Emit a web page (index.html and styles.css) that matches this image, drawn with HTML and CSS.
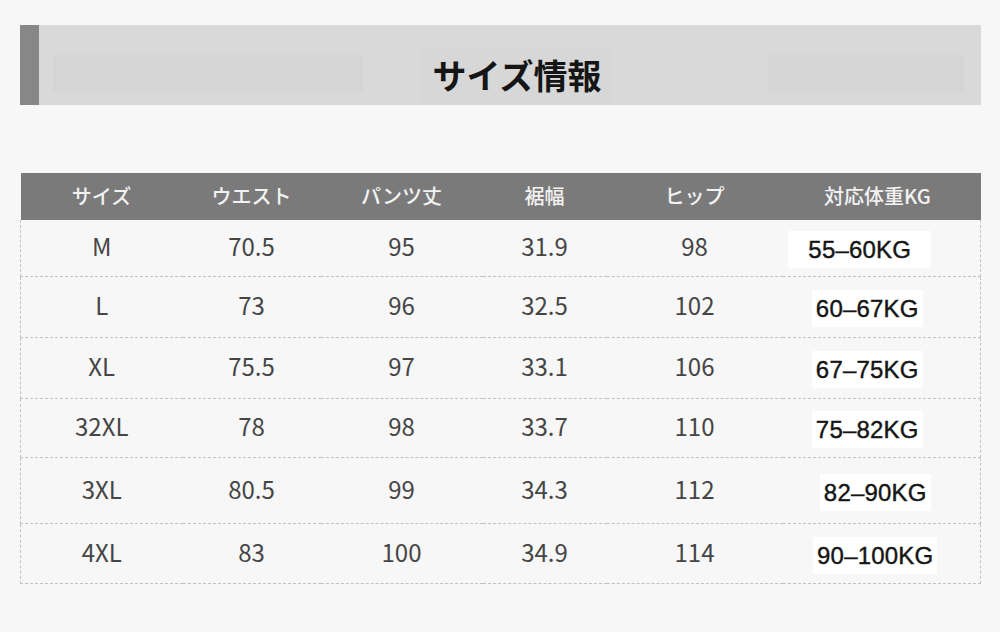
FILE: index.html
```html
<!DOCTYPE html>
<html lang="ja">
<head>
<meta charset="utf-8">
<title>サイズ情報</title>
<link rel="stylesheet" href="styles.css">
</head>
<body>
<div class="page">
  <div class="banner">
    <div class="banner-bar"></div>
    <div class="banner-body">
      <div class="patch patch-left"></div>
      <div class="title-box"><h1 class="title">サイズ情報</h1></div>
      <div class="patch patch-right"></div>
    </div>
  </div>

  <table class="size-table">
    <thead>
      <tr>
        <th>サイズ</th><th>ウエスト</th><th>パンツ丈</th><th>裾幅</th><th>ヒップ</th><th class="kg-col">対応体重KG</th>
      </tr>
    </thead>
    <tbody>
      <tr class="r1">
        <td>M</td><td>70.5</td><td>95</td><td>31.9</td><td>98</td><td class="kg-col"><span class="kg kg-wide kg-s1">55–60KG</span></td>
      </tr>
      <tr class="r2">
        <td>L</td><td>73</td><td>96</td><td>32.5</td><td>102</td><td class="kg-col"><span class="kg kg-s2">60–67KG</span></td>
      </tr>
      <tr class="r3">
        <td>XL</td><td>75.5</td><td>97</td><td>33.1</td><td>106</td><td class="kg-col"><span class="kg kg-s2">67–75KG</span></td>
      </tr>
      <tr class="r4">
        <td>32XL</td><td>78</td><td>98</td><td>33.7</td><td>110</td><td class="kg-col"><span class="kg kg-s2">75–82KG</span></td>
      </tr>
      <tr class="r5">
        <td>3XL</td><td>80.5</td><td>99</td><td>34.3</td><td>112</td><td class="kg-col"><span class="kg kg-s3">82–90KG</span></td>
      </tr>
      <tr class="r6">
        <td>4XL</td><td>83</td><td>100</td><td>34.9</td><td>114</td><td class="kg-col"><span class="kg kg-s3">90–100KG</span></td>
      </tr>
    </tbody>
  </table>
</div>
</body>
</html>
```

FILE: styles.css
```css
html, body {
  margin: 0;
  padding: 0;
  background: #f7f7f7;
}

.page {
  width: 1000px;
  height: 632px;
  padding: 25px 0 0 20px;
  box-sizing: border-box;
  font-family: "Noto Sans CJK JP", "Noto Sans", sans-serif;
}

.banner {
  display: flex;
  width: 961px;
  height: 80px;
  background: #d9d9d9;
}

.banner-bar {
  width: 19px;
  background: #878787;
}

.banner-body {
  flex: 1;
  display: flex;
  align-items: flex-end;
  padding-left: 14px;
}

.patch {
  height: 38px;
  margin-bottom: 12px;
  background: #d5d5d5;
}

.patch-left {
  width: 310px;
}

.patch-right {
  width: 196px;
  margin-left: 156px;
}

.title-box {
  width: 190px;
  height: 58px;
  margin-left: 59px;
  background: #d7d7d7;
  display: flex;
  align-items: center;
  justify-content: center;
}

.title {
  margin: 0;
  font-size: 34px;
  font-weight: 700;
  color: #151515;
  line-height: 1;
  padding-bottom: 2px;
}

.size-table {
  margin-top: 68px;
  width: 960px;
  border-collapse: collapse;
  table-layout: fixed;
}

.size-table th:nth-child(1) { width: 162px; }
.size-table th:nth-child(2) { width: 138px; }
.size-table th:nth-child(3) { width: 162px; }
.size-table th:nth-child(4) { width: 124px; }
.size-table th:nth-child(5) { width: 176px; }
.size-table th:nth-child(6) { width: 190px; }

.size-table th {
  height: 44px;
  padding: 0 0 3px;
  background: #7a7a7a;
  color: #f2f2f2;
  font-size: 20px;
  font-weight: 500;
  text-align: center;
}

.size-table th.kg-col {
  padding-right: 8px;
}

.size-table td {
  padding: 0 0 5px;
  text-align: center;
  font-size: 24px;
  color: #454545;
  border-bottom: 1px dashed #c2c2c2;
}

.size-table td:first-child {
  border-left: 1px dashed #c2c2c2;
}

.size-table td:last-child {
  border-right: 1px dashed #c2c2c2;
}

.size-table td.kg-col {
  padding: 0 8px 5px 0;
}

.r1 td { height: 51px; }
.r2 td { height: 55px; }
.r3 td { height: 55px; }
.r4 td { height: 53px; }
.r5 td { height: 60px; }
.r6 td { height: 54px; }

.kg {
  display: inline-block;
  height: 37px;
  line-height: 37px;
  margin-top: 8px;
  padding: 0 4px;
  background: #ffffff;
  color: #151515;
  font-family: "Liberation Sans", Arial, sans-serif;
  font-size: 24px;
  letter-spacing: 0.2px;
  -webkit-text-stroke: 0.4px #151515;
}

.kg-wide {
  padding: 0 20px;
}

.kg-s1 {
  margin-right: 35px;
}

.kg-s2 {
  margin-right: 20px;
}

.kg-s3 {
  margin-right: 4px;
}
```
